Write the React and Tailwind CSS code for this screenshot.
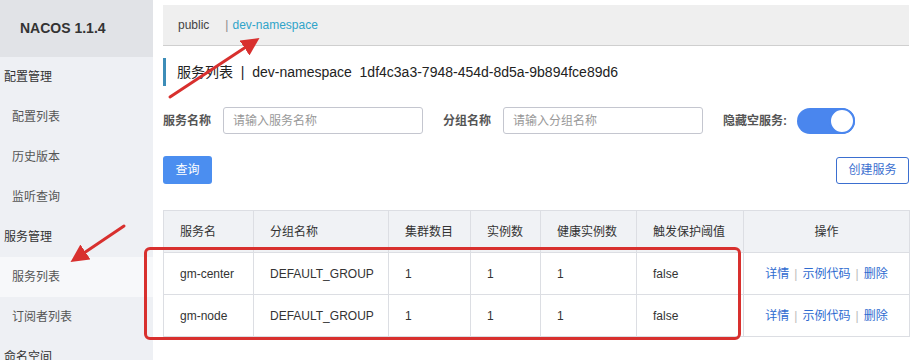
import React from "react";

const cjk = { fontFamily: '"Liberation Sans", "Noto Sans CJK SC", sans-serif' };

function Sidebar() {
  const items = [
    { t: "配置管理", lvl: 0 },
    { t: "配置列表", lvl: 1 },
    { t: "历史版本", lvl: 1 },
    { t: "监听查询", lvl: 1 },
    { t: "服务管理", lvl: 0 },
    { t: "服务列表", lvl: 1, active: true },
    { t: "订阅者列表", lvl: 1 },
    { t: "命名空间", lvl: 0 },
  ];
  return (
    <div className="w-[153px] shrink-0 bg-[#eef0f4] h-[360px] overflow-hidden">
      <div className="h-[57px] bg-[#e1e3e7] flex items-center pl-[20px] text-[14px] font-bold text-[#333]">
        NACOS 1.1.4
      </div>
      {items.map((it) => (
        <div
          key={it.t}
          className={`h-[40px] flex items-center text-[12px] ${
            it.lvl ? "pl-[12px] text-[#555]" : "pl-[4px] text-[#333]"
          } ${it.active ? "bg-[#f7f8fa]" : ""}`}
        >
          {it.t}
        </div>
      ))}
    </div>
  );
}

function Input({ ph }) {
  return (
    <div className="w-[200px] h-[27px] border border-[#c4c6cf] rounded-[3px] flex items-center pl-[9px] text-[12px] text-[#999] bg-white">
      {ph}
    </div>
  );
}

const cols = [90, 135, 82, 70, 96, 107, 166];
const heads = ["服务名", "分组名称", "集群数目", "实例数", "健康实例数", "触发保护阈值", "操作"];
const rows = [
  ["gm-center", "DEFAULT_GROUP", "1", "1", "1", "false"],
  ["gm-node", "DEFAULT_GROUP", "1", "1", "1", "false"],
];

function Table() {
  return (
    <table className="border-collapse w-[746px] table-fixed text-[12px]">
      <colgroup>
        {cols.map((w, i) => (
          <col key={i} style={{ width: w }} />
        ))}
      </colgroup>
      <thead>
        <tr className="h-[42px] bg-[#f0f2f5]">
          {heads.map((h, i) => (
            <th
              key={h}
              className={`border border-[#dcdee3] font-normal text-[#333] px-[16px] whitespace-nowrap ${
                i === 6 ? "text-center" : "text-left"
              }`}
            >
              {h}
            </th>
          ))}
        </tr>
      </thead>
      <tbody>
        {rows.map((r) => (
          <tr key={r[0]} className="h-[42px]">
            {r.map((c, i) => (
              <td key={i} className="border border-[#dcdee3] px-[16px] text-[#333] whitespace-nowrap">
                {c}
              </td>
            ))}
            <td className="border border-[#dcdee3] text-center text-[#2e6bd0] whitespace-nowrap">
              详情<span className="text-[#bbb] mx-[5px]">|</span>示例代码<span className="text-[#bbb] mx-[5px]">|</span>删除
            </td>
          </tr>
        ))}
      </tbody>
    </table>
  );
}

export default function App() {
  return (
    <div className="relative w-[910px] h-[360px] overflow-hidden bg-white flex" style={cjk}>
      <Sidebar />
      <div className="pl-[10px] pt-[5px] flex-1">
        <div className="w-[746px] h-[41px] bg-[#efefef] border-b border-[#cfcfcf] flex items-center pl-[15px] text-[12px]">
          <span className="text-[#444]">public</span>
          <span className="ml-[16px] text-[#888]">|</span>
          <span className="ml-[4px] text-[#2fa4c9]">dev-namespace</span>
        </div>
        <div className="mt-[12px] h-[28px] border-l-[3px] border-[#3d8db8] flex items-center pl-[11px] text-[14px] text-[#222]">
          服务列表&nbsp;&nbsp;|&nbsp;&nbsp;dev-namespace&nbsp;&nbsp;1df4c3a3-7948-454d-8d5a-9b894fce89d6
        </div>
        <div className="mt-[21px] flex items-center h-[27px]">
          <span className="w-[60px] text-[12px] font-bold text-[#555]">服务名称</span>
          <Input ph="请输入服务名称" />
          <span className="ml-[20px] w-[60px] text-[12px] font-bold text-[#555]">分组名称</span>
          <Input ph="请输入分组名称" />
          <span className="ml-[20px] text-[12px] font-bold text-[#555]">隐藏空服务:</span>
          <div className="ml-[10px] w-[58px] h-[26px] rounded-full bg-[#4a86ee] relative">
            <div className="absolute right-0 top-0 w-[26px] h-[26px] rounded-full bg-white border-2 border-[#4a86ee]" />
          </div>
        </div>
        <div className="mt-[22px] w-[746px] flex justify-between items-center">
          <div className="w-[49px] h-[28px] rounded-[3px] bg-[#4b8ef0] text-white text-[12px] flex items-center justify-center">
            查询
          </div>
          <div className="w-[73px] h-[27px] rounded-[3px] border border-[#3b6fd0] text-[#3b6fd0] text-[12px] flex items-center justify-center">
            创建服务
          </div>
        </div>
        <div className="mt-[26px]">
          <Table />
        </div>
      </div>

      <div className="absolute left-[144px] top-[247px] w-[597px] h-[93px] border-[3px] border-[#d8302e] rounded-[6px] pointer-events-none" />

      <svg className="absolute left-0 top-0 pointer-events-none" width="910" height="360">
        <defs>
          <marker id="ah" markerWidth="6" markerHeight="6" refX="3" refY="3" orient="auto" markerUnits="strokeWidth">
            <path d="M0,0 L6,3 L0,6 Z" fill="#d8302e" />
          </marker>
        </defs>
        <line x1="170" y1="97" x2="252" y2="43" stroke="#d8302e" strokeWidth="3" strokeLinecap="round" markerEnd="url(#ah)" />
        <line x1="124" y1="226" x2="78" y2="257" stroke="#d8302e" strokeWidth="3" strokeLinecap="round" markerEnd="url(#ah)" />
      </svg>
    </div>
  );
}
